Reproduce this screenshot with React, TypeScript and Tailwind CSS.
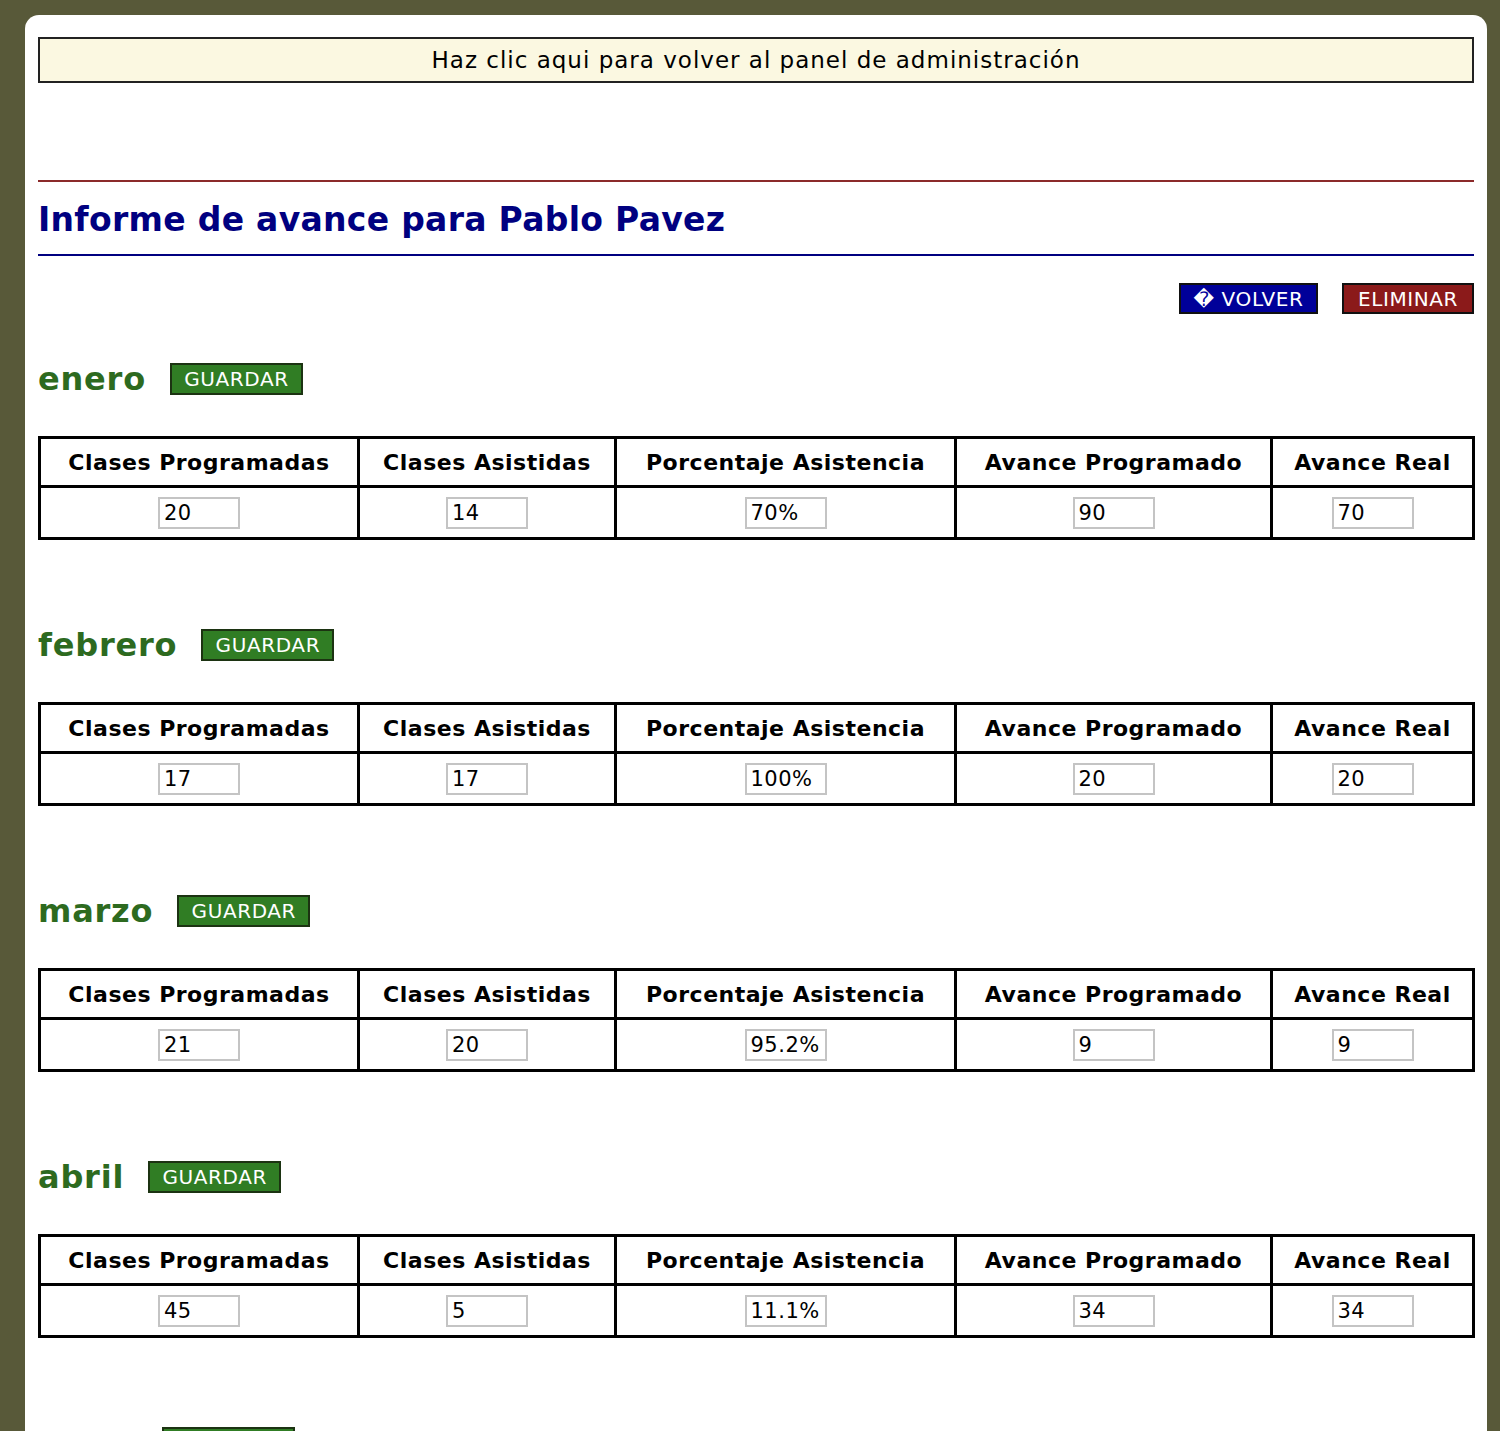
import React from 'react';

interface Mes {
  nombre: string;
  programadas: string;
  asistidas: string;
  porcentaje: string;
  avanceProgramado: string;
  avanceReal: string;
}

const MESES: Mes[] = [
  { nombre: 'enero', programadas: '20', asistidas: '14', porcentaje: '70%', avanceProgramado: '90', avanceReal: '70' },
  { nombre: 'febrero', programadas: '17', asistidas: '17', porcentaje: '100%', avanceProgramado: '20', avanceReal: '20' },
  { nombre: 'marzo', programadas: '21', asistidas: '20', porcentaje: '95.2%', avanceProgramado: '9', avanceReal: '9' },
  { nombre: 'abril', programadas: '45', asistidas: '5', porcentaje: '11.1%', avanceProgramado: '34', avanceReal: '34' },
  { nombre: 'mayo', programadas: '', asistidas: '', porcentaje: '', avanceProgramado: '', avanceReal: '' },
];

const COLUMNAS = [
  'Clases Programadas',
  'Clases Asistidas',
  'Porcentaje Asistencia',
  'Avance Programado',
  'Avance Real',
];

function Campo({ value }: { value: string }) {
  return (
    <input
      type="text"
      defaultValue={value}
      className="w-[82px] h-[32px] border-2 border-[#c4c4c4] bg-white px-[4px] text-[21px] tracking-[0.5px] text-black outline-none"
    />
  );
}

function SeccionMes({ mes }: { mes: Mes }) {
  const valores = [mes.programadas, mes.asistidas, mes.porcentaje, mes.avanceProgramado, mes.avanceReal];
  return (
    <section className="mb-[89px]">
      {/* Month title + save button */}
      <div className="flex items-center gap-[24px] h-[32px]">
        <h2 className="text-[32px] leading-none font-bold tracking-[0.8px] text-[#2d6a1f]">{mes.nombre}</h2>
        <button className="w-[133px] h-[32px] border-2 border-[#1c3312] bg-[#307d24] text-white text-[20px] tracking-[0.6px] leading-none">
          GUARDAR
        </button>
      </div>

      <table className="mt-[41px] w-[1434px] table-fixed border-collapse border-[3px] border-black">
        <colgroup>
          <col className="w-[319px]" />
          <col className="w-[257px]" />
          <col className="w-[340px]" />
          <col className="w-[316px]" />
          <col className="w-[202px]" />
        </colgroup>
        <thead>
          <tr>
            {COLUMNAS.map(c => (
              <th key={c} className="h-[49px] border-[3px] border-black text-[22px] tracking-[0.5px] font-bold text-black text-center">
                {c}
              </th>
            ))}
          </tr>
        </thead>
        <tbody>
          <tr>
            {valores.map((v, i) => (
              <td key={i} className="h-[52px] border-[3px] border-black text-center">
                <Campo value={v} />
              </td>
            ))}
          </tr>
        </tbody>
      </table>
    </section>
  );
}

export default function App() {
  return (
    <div
      className="min-h-screen bg-[#585939] pt-[15px]"
      style={{ fontFamily: '"DejaVu Sans", Verdana, sans-serif' }}
    >
      <div className="ml-[25px] mr-[13px] bg-white rounded-t-[14px] px-[13px] pt-[22px]">
        {/* Back to admin banner */}
        <a
          href="#"
          className="flex items-center justify-center h-[46px] border-2 border-[#222] bg-[#fbf8e1] text-[23px] tracking-[1px] text-black"
        >
          Haz clic aqui para volver al panel de administración
        </a>

        <div className="h-[97px]" />
        <div className="h-[2px] bg-[#8b2a2a]" />

        <div className="h-[72px] flex items-center pt-[2px]">
          <h1 className="text-[33px] leading-none font-bold tracking-[0.3px] text-[#000080]">
            Informe de avance para Pablo Pavez
          </h1>
        </div>
        <div className="h-[2px] bg-[#000080]" />

        {/* Actions */}
        <div className="mt-[27px] flex justify-end gap-[24px]">
          <button className="w-[139px] h-[31px] border-2 border-[#111] bg-[#000099] text-white text-[20px] tracking-[0.6px] leading-none">
            {'\uFFFD'} VOLVER
          </button>
          <button className="w-[132px] h-[31px] border-2 border-[#111] bg-[#8b1a1a] text-white text-[20px] tracking-[0.6px] leading-none">
            ELIMINAR
          </button>
        </div>

        <div className="mt-[49px]">
          {MESES.map(m => (
            <SeccionMes key={m.nombre} mes={m} />
          ))}
        </div>
      </div>
    </div>
  );
}
